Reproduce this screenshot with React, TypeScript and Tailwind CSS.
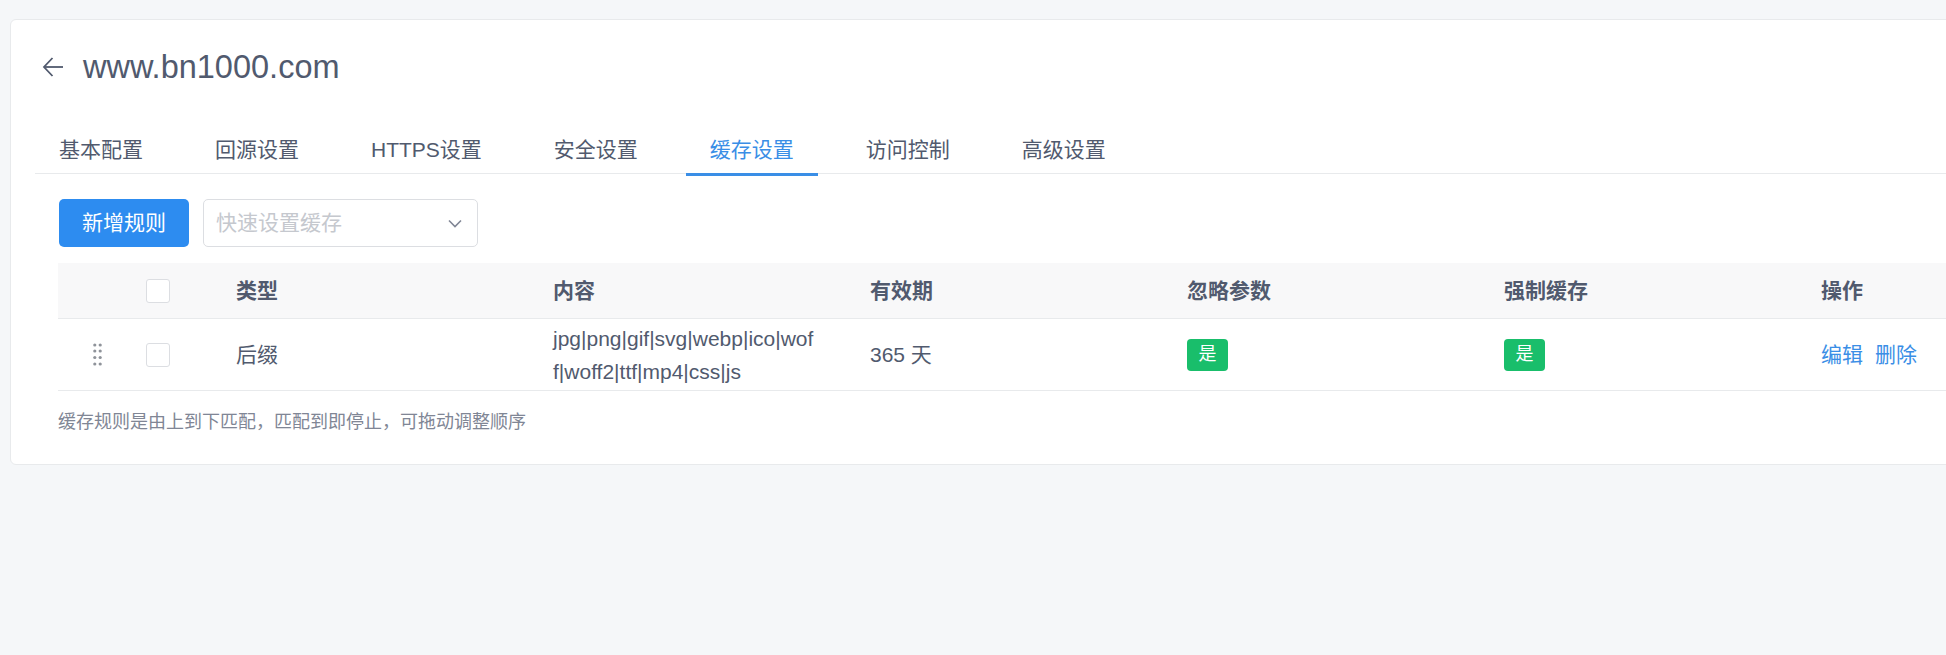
const tabs = ['基本配置', '回源设置', 'HTTPS设置', '安全设置', '缓存设置', '访问控制', '高级设置']

const columns = ['类型', '内容', '有效期', '忽略参数', '强制缓存', '操作']

function DragHandle() {
  return (
    <svg width="9" height="23" viewBox="0 0 9 23" className="text-[#8f939a]">
      {[2, 8, 14.5, 21].map((cy) => (
        <g key={cy} fill="currentColor">
          <circle cx="1.8" cy={cy} r="1.6" />
          <circle cx="7.2" cy={cy} r="1.6" />
        </g>
      ))}
    </svg>
  )
}

function Checkbox() {
  return <span className="block w-[24px] h-[24px] rounded-[3px] border border-[#dcdee2] bg-white" />
}

function YesBadge() {
  return (
    <span className="inline-flex items-center justify-center w-[41px] h-[32px] rounded-[4px] bg-[#19be6b] text-white text-[18px]">
      是
    </span>
  )
}

export default function App() {
  return (
    <div
      className="w-[1946px] h-[655px] overflow-hidden bg-[#f5f7f9] pt-[19px] pl-[10px] text-[#515a6e]"
      style={{ fontFamily: '"Liberation Sans", "Noto Sans CJK SC", sans-serif' }}
    >
      <div className="w-[2200px] h-[446px] bg-white border border-[#e8eaec] rounded-[6px]">
        {/* title */}
        <div className="h-[94px] flex items-center pl-[31px]">
          <svg width="22" height="22" viewBox="0 0 22 22" fill="none" stroke="currentColor" strokeWidth="1.8" className="text-[#515a6e]">
            <path d="M21 11H2" />
            <path d="M10.5 2 2 11l8.5 9" />
          </svg>
          <h1 className="ml-[19px] text-[32.5px] leading-none text-[#515a6e]">www.bn1000.com</h1>
        </div>

        {/* tabs */}
        <div className="mt-[13px] ml-[24px] h-[47px] flex border-b border-[#e8eaec]">
          {tabs.map((tab) => {
            const active = tab === '缓存设置'
            return (
              <div
                key={tab}
                className={`relative h-[46px] px-[24px] mr-[24px] flex items-center text-[21px] ${
                  active ? 'text-[#3a8ee6]' : 'text-[#515a6e]'
                }`}
              >
                {tab}
                {active && <span className="absolute left-0 right-0 bottom-[-3px] h-[3px] bg-[#3a8ee6]" />}
              </div>
            )
          })}
        </div>

        {/* toolbar */}
        <div className="mt-[25px] ml-[48px] flex items-center gap-[14px]">
          <button className="w-[130px] h-[48px] rounded-[5px] bg-[#2d8cf0] text-white text-[21px]">新增规则</button>
          <div className="w-[275px] h-[48px] rounded-[5px] border border-[#dcdee2] flex items-center justify-between pl-[12px] pr-[15px]">
            <span className="text-[21px] text-[#c5c8ce]">快速设置缓存</span>
            <svg width="14" height="9" viewBox="0 0 14 9" fill="none" stroke="#808695" strokeWidth="1.6">
              <path d="M1 1.5 7 7.5l6-6" />
            </svg>
          </div>
        </div>

        {/* table */}
        <div className="mt-[16px] ml-[47px] w-[2060px]">
          <div className="flex h-[56px] items-center bg-[#f8f8f9] border-b border-[#e8eaec] text-[21px] font-bold text-[#515a6e]">
            <div className="w-[72px]" />
            <div className="w-[86px] pl-[16px]">
              <Checkbox />
            </div>
            {columns.map((c) => (
              <div key={c} className="w-[317px] pl-[20px]">
                {c}
              </div>
            ))}
          </div>
          <div className="flex h-[72px] items-center border-b border-[#e8eaec] text-[21px] text-[#515a6e]">
            <div className="w-[72px] pl-[35px] flex items-center">
              <DragHandle />
            </div>
            <div className="w-[86px] pl-[16px]">
              <Checkbox />
            </div>
            <div className="w-[317px] pl-[20px]">后缀</div>
            <div className="w-[317px] pl-[20px]">
              <div className="w-[263px] break-all leading-[33px]">jpg|png|gif|svg|webp|ico|woff|woff2|ttf|mp4|css|js</div>
            </div>
            <div className="w-[317px] pl-[20px]">365 天</div>
            <div className="w-[317px] pl-[20px] flex">
              <YesBadge />
            </div>
            <div className="w-[317px] pl-[20px] flex">
              <YesBadge />
            </div>
            <div className="w-[317px] pl-[20px] flex gap-[12px] text-[#3a8ee6]">
              <span>编辑</span>
              <span>删除</span>
            </div>
          </div>
        </div>

        <p className="mt-[18px] ml-[47px] text-[18px] leading-[27px] text-[#808695]">
          缓存规则是由上到下匹配，匹配到即停止，可拖动调整顺序
        </p>
      </div>
    </div>
  )
}
